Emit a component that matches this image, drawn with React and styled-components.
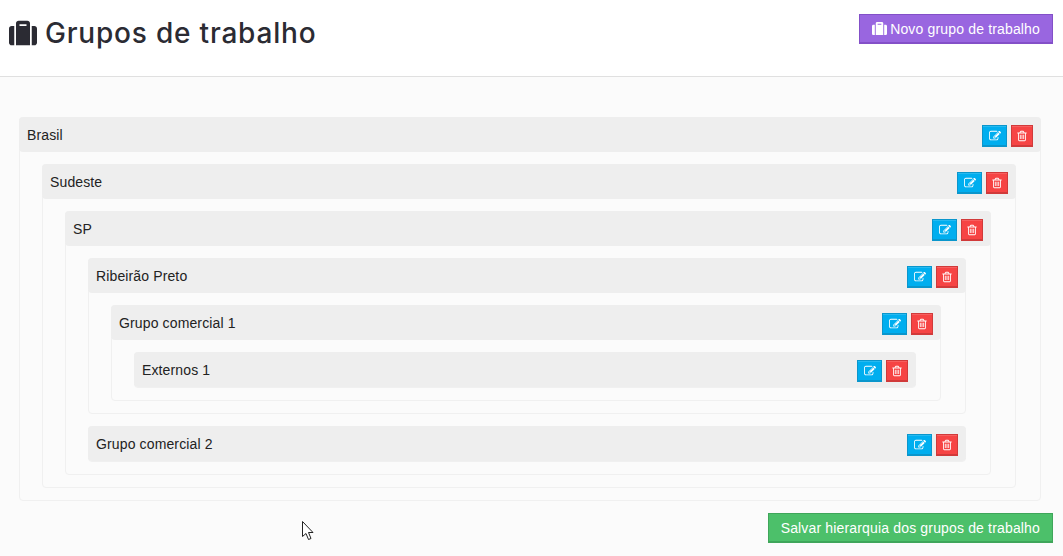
import styled, { createGlobalStyle } from 'styled-components';
import { FaSuitcase } from 'react-icons/fa';

const GlobalStyle = createGlobalStyle`
  html, body {
    margin: 0;
    background: #fbfbfb;
    font-family: "Liberation Sans", Arial, sans-serif;
    font-size: 14px;
    color: #222;
    overflow: hidden;
  }
`
const Header = styled.header`
  height: 77px;
  box-sizing: border-box;
  background: #fff;
  border-bottom: 1px solid #e0e0e0;
  display: flex;
  justify-content: space-between;
  align-items: flex-start;
  padding: 14px 10px 0 9px;
`
const Title = styled.h1`
  margin: 0;
  height: 38px;
  display: flex;
  align-items: center;
  gap: 8px;
  font-family: Inter, "Liberation Sans", sans-serif;
  font-weight: 500;
  font-size: 28px;
  letter-spacing: 0.8px;
  color: #2b2b33;
`
const Main = styled.main`
  padding: 40px 22px 0 19px;
`
const Item = styled.div`
  border: 1px solid #f0f0f0;
  border-radius: 4px;
  margin-bottom: ${(p) => (p.$root ? '0' : '12px')};
`
const Head = styled.div`
  height: 35px;
  box-sizing: border-box;
  background: #eeeeee;
  margin: -1px -1px 0;
  padding: 8px 8px 0;
  border-radius: 4px;
  display: flex;
  justify-content: space-between;
`
const Name = styled.span`
  line-height: 21px;
  letter-spacing: 0.13px;
  color: #222;
`
const Actions = styled.div`
  display: flex;
  gap: 4px;
`
const IconButton = styled.button`
  height: 22px;
  width: ${(p) => p.$width}px;
  padding: 0;
  display: flex;
  align-items: center;
  justify-content: center;
  border: 1px solid ${(p) => p.$edge};
  border-bottom-width: 2px;
  background: ${(p) => p.$color};
  box-shadow: inset 0 1px rgba(255, 255, 255, 0.15);
  color: #fff;
`
const Children = styled.div`
  padding: 12px 24px 0 22px;
`
const Footer = styled.div`
  display: flex;
  justify-content: flex-end;
  padding: 12px 10px 0 0;
  margin-right: -22px;
`
const ActionButton = styled.button`
  height: 30px;
  box-sizing: border-box;
  padding: 0 12px;
  display: flex;
  align-items: center;
  gap: 3px;
  border: 1px solid ${(p) => p.$edge};
  border-bottom-width: 2px;
  background: ${(p) => p.$color};
  color: #fff;
  font-family: "Liberation Sans", Arial, sans-serif;
  font-size: 14px;
  letter-spacing: 0.16px;
`
const Cursor = styled.svg`
  position: absolute;
  left: 302px;
  top: 521px;
`

const EditIcon = () => (
  <svg width="12" height="12" viewBox="0 0 1792 1792" fill="currentColor">
    <path d="M888 1184l116-116-152-152-116 116v56h96v96h56zm440-720q-16-16-33 1l-350 350q-17 17-1 33t33-1l350-350q17-17 1-33zm80 594v190q0 119-84.5 203.5t-203.5 84.5h-832q-119 0-203.5-84.5t-84.5-203.5v-832q0-119 84.5-203.5t203.5-84.5h832q63 0 117 25 15 7 18 23 3 17-9 29l-49 49q-14 14-32 8-23-6-45-6h-832q-66 0-113 47t-47 113v832q0 66 47 113t113 47h832q66 0 113-47t47-113v-126q0-13 9-22l64-64q15-15 35-7t20 29zm-96-738l288 288-672 672h-288v-288zm444 132l-92 92-288-288 92-92q28-28 68-28t68 28l152 152q28 28 28 68t-28 68z" />
  </svg>
);

const TrashIcon = () => (
  <svg width="12" height="12" viewBox="0 0 1792 1792" fill="currentColor">
    <path d="M704 736v576q0 14-9 23t-23 9h-64q-14 0-23-9t-9-23v-576q0-14 9-23t23-9h64q14 0 23 9t9 23zm256 0v576q0 14-9 23t-23 9h-64q-14 0-23-9t-9-23v-576q0-14 9-23t23-9h64q14 0 23 9t9 23zm256 0v576q0 14-9 23t-23 9h-64q-14 0-23-9t-9-23v-576q0-14 9-23t23-9h64q14 0 23 9t9 23zm128 724v-948h-896v948q0 22 7 40.5t14.5 27 10.5 8.5h832q3 0 10.5-8.5t14.5-27 7-40.5zm-672-1076h448l-48-117q-7-9-17-11h-317q-10 2-17 11zm928 32v64q0 14-9 23t-23 9h-96v948q0 83-47 143.5t-113 60.5h-832q-66 0-113-59t-47-142v-952h-96q-14 0-23-9t-9-23v-64q0-14 9-23t23-9h309l70-167q15-37 54-63t79-26h320q40 0 79 26t54 63l70 167h309q14 0 23 9t9 23z" />
  </svg>
);

const tree = {
  name: 'Brasil',
  children: [
    {
      name: 'Sudeste',
      children: [
        {
          name: 'SP',
          children: [
            {
              name: 'Ribeirão Preto',
              children: [
                {
                  name: 'Grupo comercial 1',
                  children: [{ name: 'Externos 1' }],
                },
              ],
            },
            { name: 'Grupo comercial 2' },
          ],
        },
      ],
    },
  ],
};

function Group({ group, root }) {
  return (
    <Item $root={root}>
      <Head>
        <Name>{group.name}</Name>
        <Actions>
          <IconButton $width={25} $color="#00aeef" $edge="#0a96cc"><EditIcon /></IconButton>
          <IconButton $width={22} $color="#f64444" $edge="#d13a3a"><TrashIcon /></IconButton>
        </Actions>
      </Head>
      {group.children && (
        <Children>
          {group.children.map((c) => <Group key={c.name} group={c} />)}
        </Children>
      )}
    </Item>
  );
}

export default function App() {
  return (
    <>
      <GlobalStyle />
      <Header>
        <Title><FaSuitcase size={28} />Grupos de trabalho</Title>
        <ActionButton $color="#9966e0" $edge="#8350c8"><FaSuitcase size={15} />Novo grupo de trabalho</ActionButton>
      </Header>
      <Main>
        <Group group={tree} root />
        <Footer>
          <ActionButton $color="#4cc06a" $edge="#3fa65a">Salvar hierarquia dos grupos de trabalho</ActionButton>
        </Footer>
      </Main>
      <Cursor width="14" height="20" viewBox="0 0 14 20">
        <path d="M0.5 0.5 V15.5 L4 12.5 L6.5 18.5 L9 17.5 L6.5 11.5 H11 Z" fill="#fff" stroke="#222" strokeWidth="1" />
      </Cursor>
    </>
  );
}
